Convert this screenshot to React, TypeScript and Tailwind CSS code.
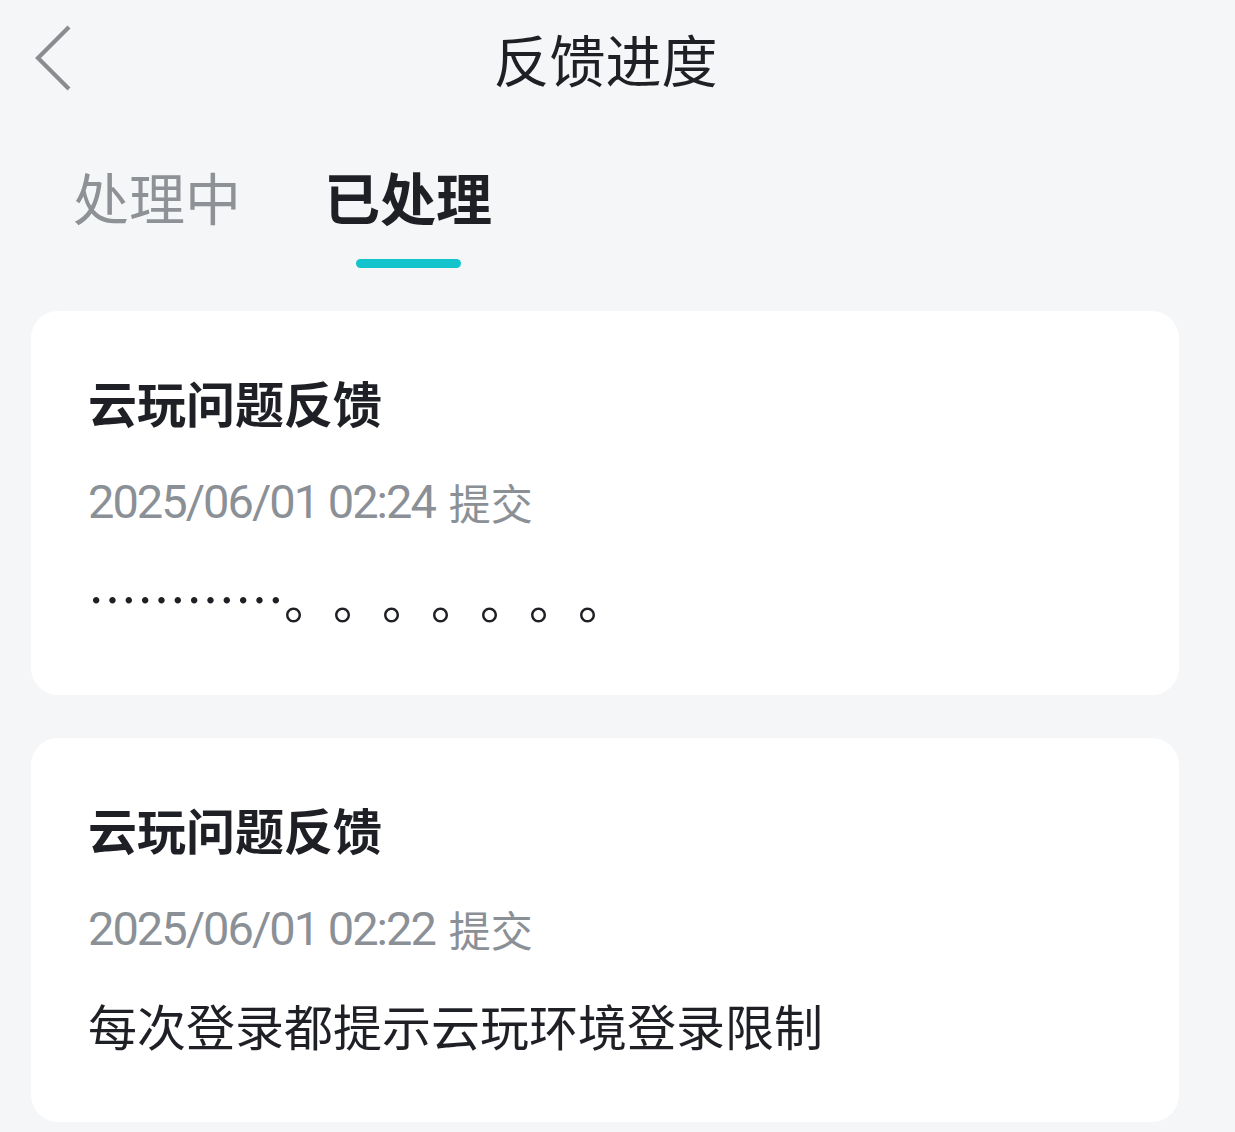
import React from "react";

const CJK = "font-['Noto_Sans_CJK_SC',sans-serif]";

function Card({ date, children }: { date: string; children: React.ReactNode }) {
  return (
    <div className="ml-[31px] w-[1148px] rounded-[27px] bg-white pl-[57px] pt-[42px] pb-[48px]">
      <div className={`flex h-[98px] items-center text-[49px] font-bold leading-[60px] text-[#1f2025] ${CJK}`}>
        云玩问题反馈
      </div>
      <div className="flex h-[98px] items-center pt-[4px] leading-[60px] text-[#8b9096]">
        <span className="font-['Roboto',sans-serif] text-[47px] tracking-[-2px]">{date}</span>
        <span className={`ml-[14px] text-[42px] ${CJK}`}>提交</span>
      </div>
      <div className={`flex h-[98px] items-center text-[49px] leading-[60px] text-[#1f2025] [text-spacing-trim:space-all] ${CJK}`}>
        {children}
      </div>
    </div>
  );
}

export default function App() {
  return (
    <div className={`min-h-[1132px] w-[1235px] bg-[#f5f6f8] ${CJK}`}>
      <div className="flex h-[116px] items-center">
        <div className="flex w-[100px] items-center pl-[34px]">
          <svg width="40" height="66" viewBox="0 0 40 66" fill="none">
            <path d="M35 2 L4 33 L35 64" stroke="#8a8c90" strokeWidth="4.2" strokeLinecap="butt" strokeLinejoin="miter" />
          </svg>
        </div>
        <div className="flex-1 text-center text-[56px] leading-[70px] text-[#1f2025]">反馈进度</div>
        <div className="w-[124px]" />
      </div>

      <div className="flex pl-[73px] pt-[48px]">
        <div className="flex flex-col items-center">
          <div className="text-[56px] leading-[64px] text-[#8e9196]">处理中</div>
          <div className="mt-[31px] h-[9px] w-[105px]" />
        </div>
        <div className="ml-[83px] flex flex-col items-center">
          <div className="text-[56px] font-bold leading-[64px] text-[#1f2025]">已处理</div>
          <div className="mt-[31px] h-[9px] w-[105px] rounded-full bg-[#14c4cc]" />
        </div>
      </div>

      <div className="mt-[43px] flex flex-col gap-[43px] pb-[10px]">
        <Card date="2025/06/01 02:24">
          <span>…………。。。。。。。</span>
        </Card>
        <Card date="2025/06/01 02:22">
          <span>每次登录都提示云玩环境登录限制</span>
        </Card>
      </div>
    </div>
  );
}
